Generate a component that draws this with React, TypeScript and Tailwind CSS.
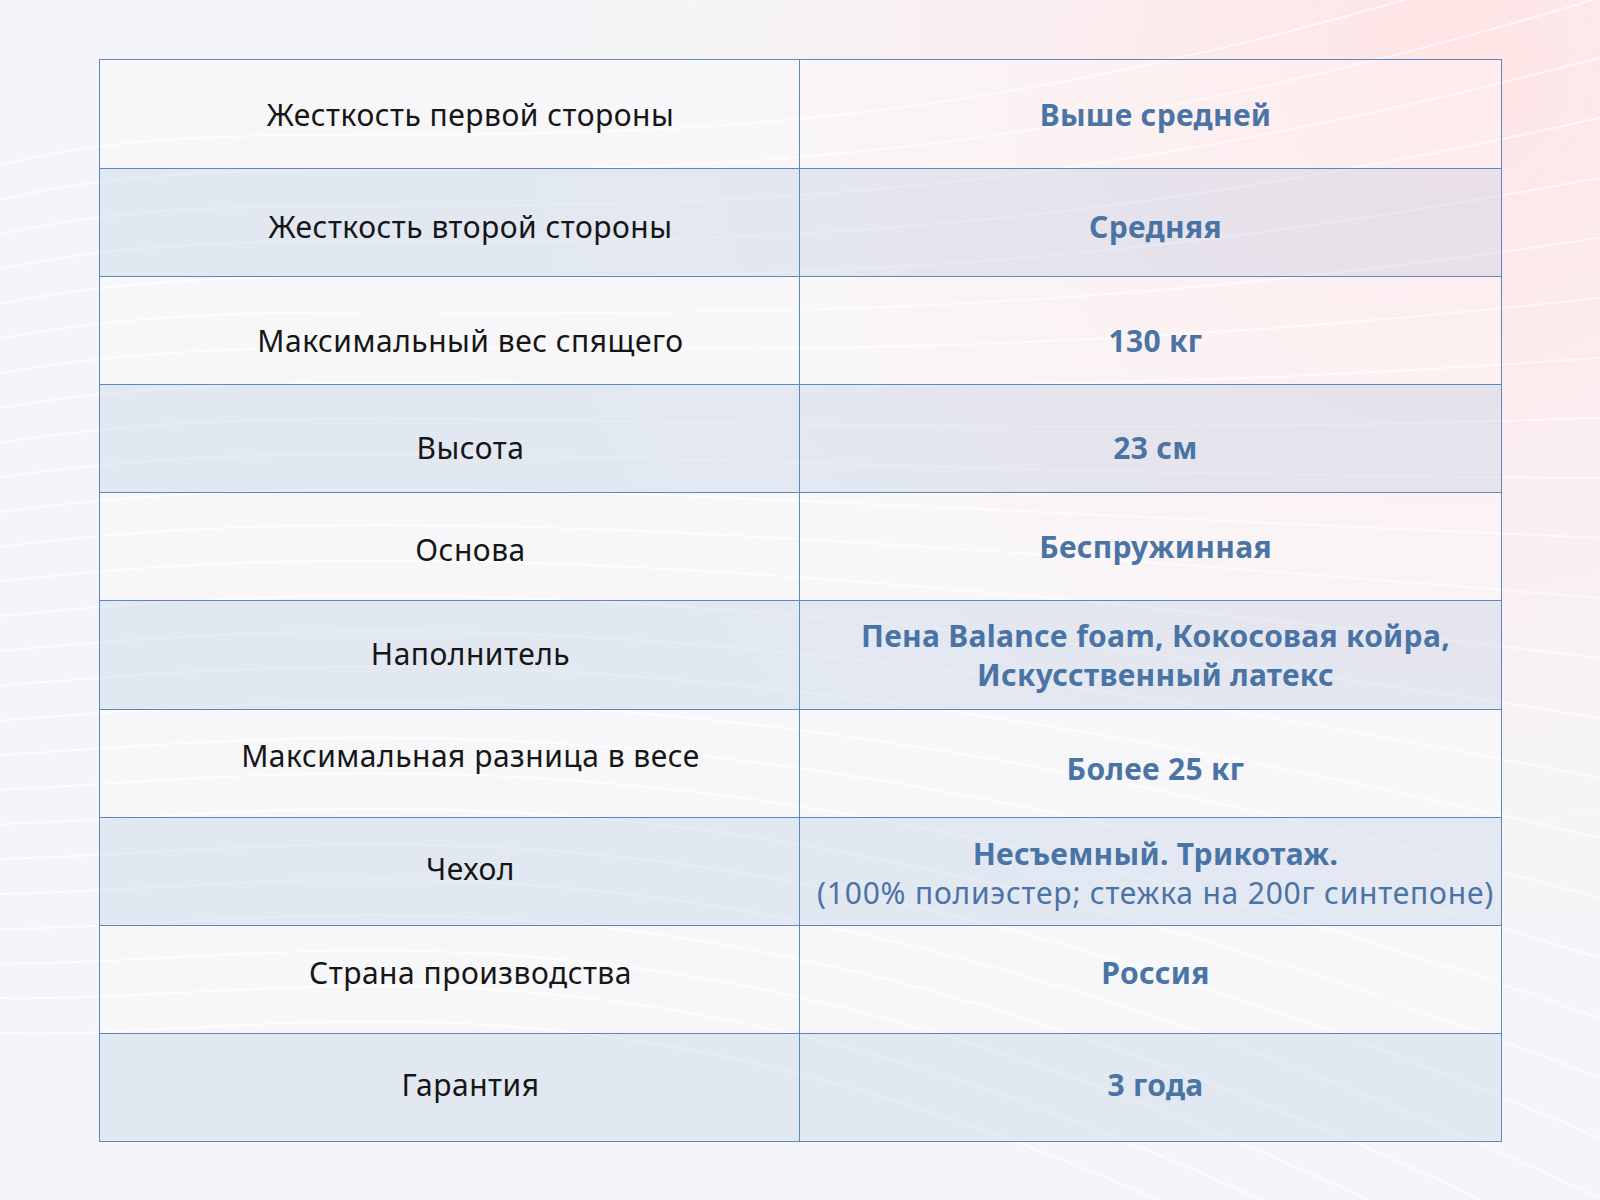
import React from "react";

type Row = {
  label: string;
  value: string;
  extra?: string;
  leftPad: string;
  rightPad: string;
};

const rows: Row[] = [
  { label: "Жесткость первой стороны", value: "Выше средней", leftPad: "", rightPad: "" },
  { label: "Жесткость второй стороны", value: "Средняя", leftPad: "pt-[8px]", rightPad: "pt-[8px]" },
  { label: "Максимальный вес спящего", value: "130 кг", leftPad: "pt-[20px]", rightPad: "pt-[20px]" },
  { label: "Высота", value: "23 см", leftPad: "pt-[18px]", rightPad: "pt-[18px]" },
  { label: "Основа", value: "Беспружинная", leftPad: "pt-[6px]", rightPad: "" },
  {
    label: "Наполнитель",
    value: "Пена Balance foam, Кокосовая койра, Искусственный латекс",
    leftPad: "pb-[4px]",
    rightPad: "",
  },
  { label: "Максимальная разница в весе", value: "Более 25 кг", leftPad: "pb-[16px]", rightPad: "pt-[10px]" },
  {
    label: "Чехол",
    value: "Несъемный. Трикотаж.",
    extra: "(100% полиэстер; стежка на 200г синтепоне)",
    leftPad: "pb-[6px]",
    rightPad: "pt-[4px]",
  },
  { label: "Страна производства", value: "Россия", leftPad: "pb-[14px]", rightPad: "pb-[14px]" },
  { label: "Гарантия", value: "3 года", leftPad: "pb-[6px]", rightPad: "pb-[6px]" },
];

const Waves = () => {
  const lines = Array.from({ length: 26 }, (_, i) => i);
  return (
    <svg
      className="absolute inset-0 h-full w-full"
      viewBox="0 0 1600 1200"
      preserveAspectRatio="none"
    >
      <defs>
        <radialGradient id="pink" cx="1450" cy="60" r="950" gradientUnits="userSpaceOnUse">
          <stop offset="0" stopColor="#ffe4e5" />
          <stop offset="0.55" stopColor="#fbeef0" stopOpacity="0.75" />
          <stop offset="1" stopColor="#f6f7f9" stopOpacity="0" />
        </radialGradient>
      </defs>
      <rect width="1600" height="1200" fill="#f4f5f8" />
      <rect width="1600" height="1200" fill="url(#pink)" />
      {lines.map((i) => {
        const y = 180 + i * 34;
        return (
          <path
            key={i}
            d={`M -50 ${y} C 300 ${y - 120 + i * 6}, 700 ${y + 80 - i * 10}, 1650 ${y - 260 + i * 28}`}
            fill="none"
            stroke="#ffffff"
            strokeOpacity={0.6}
            strokeWidth={2}
          />
        );
      })}
    </svg>
  );
};

export default function App() {
  return (
    <div className="relative h-[1200px] w-[1600px] overflow-hidden">
      <Waves />
      <div className="relative pl-[99px] pt-[59px]">
        <div className="w-[1403px] border border-[#5d88c2] [font-family:'Noto_Sans',sans-serif]">
          {rows.map((row, i) => (
            <div
              key={row.label}
              className={`grid h-[108.1px] grid-cols-[700px_1fr] ${
                i > 0 ? "border-t border-[#5d88c2]" : ""
              } ${i % 2 === 1 ? "bg-[#c8d5e8]/40" : "bg-white/25"}`}
            >
              <div
                className={`flex items-center justify-center border-r border-[#5d88c2] pl-[42px] text-[30px] tracking-[0.5px] text-[#161616] ${row.leftPad}`}
              >
                {row.label}
              </div>
              <div
                className={`flex flex-col items-center justify-center pl-[14px] pr-[4px] text-center text-[30px] leading-[39px] text-[#4a74a5] ${row.rightPad}`}
              >
                <span className="font-bold tracking-[0.3px]">{row.value}</span>
                {row.extra && <span className="tracking-[0.8px] whitespace-nowrap">{row.extra}</span>}
              </div>
            </div>
          ))}
        </div>
      </div>
    </div>
  );
}
